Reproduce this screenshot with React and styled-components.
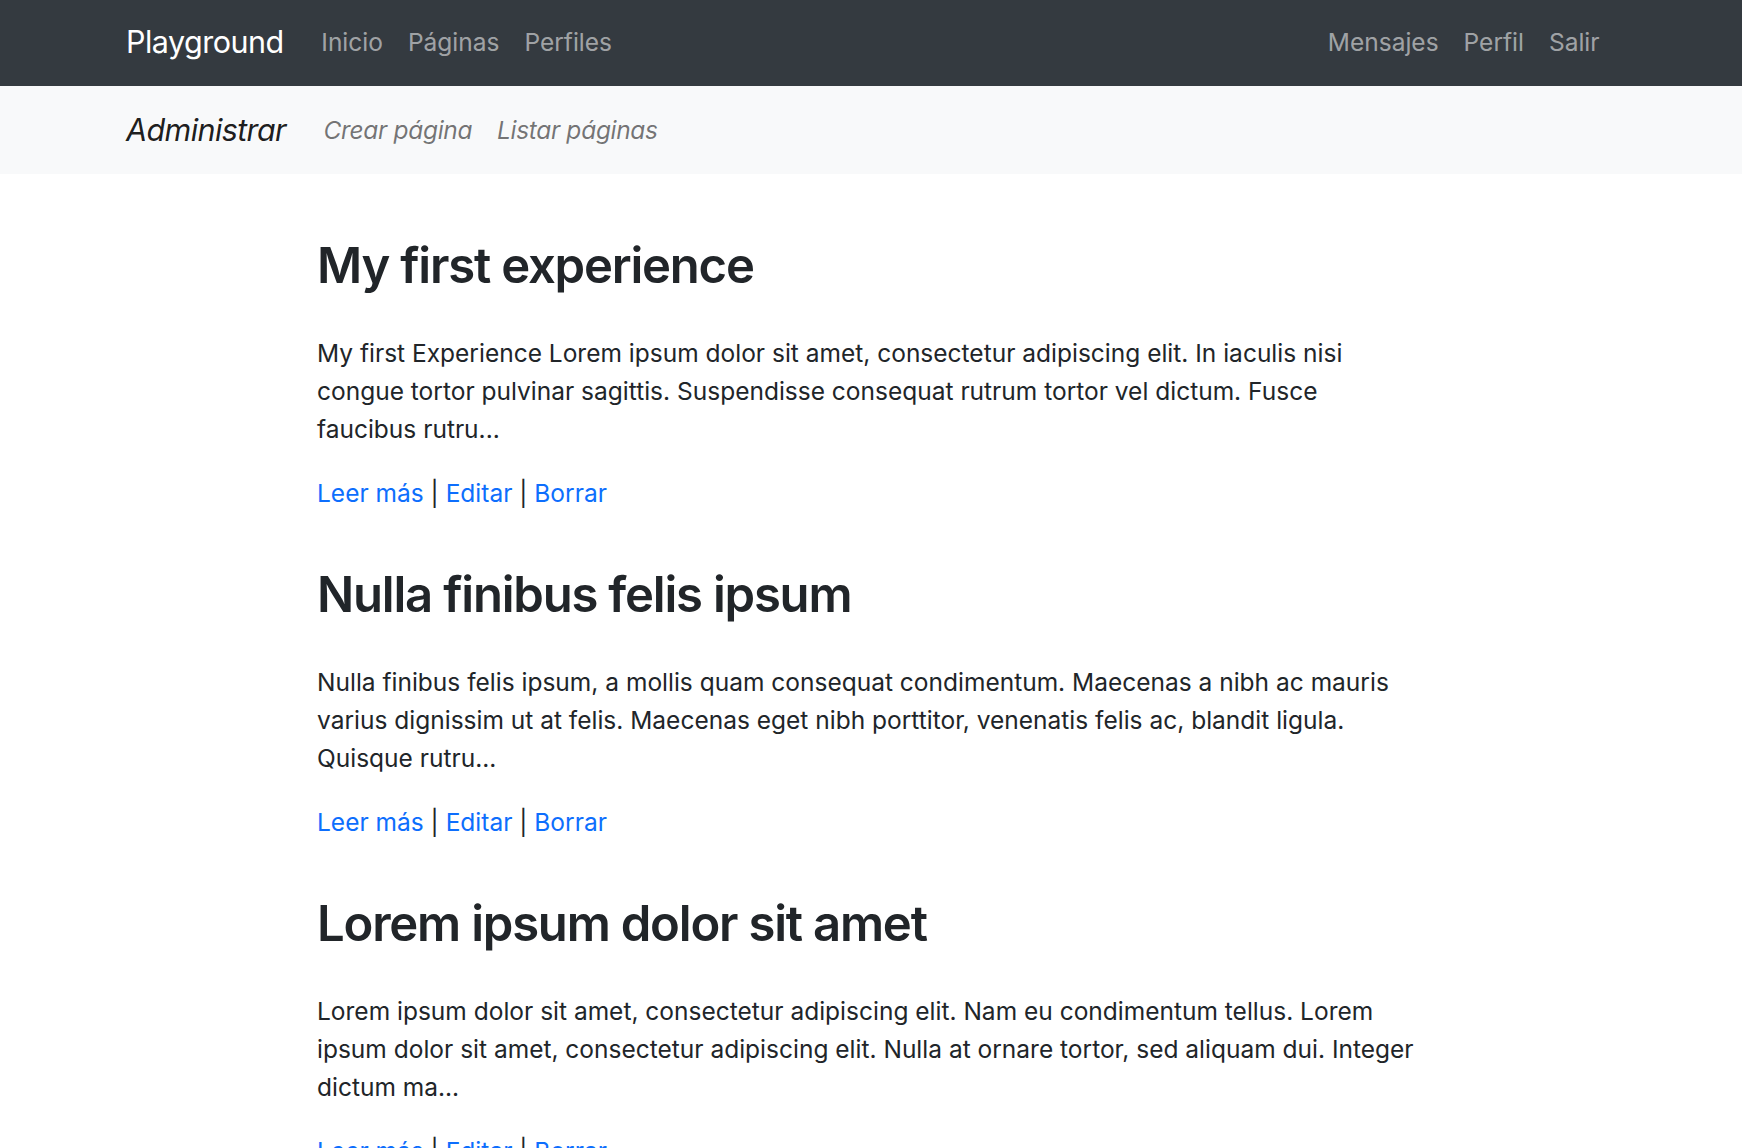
import React from "react";
import styled, { createGlobalStyle } from "styled-components";

const GlobalStyle = createGlobalStyle`
  html, body {
    margin: 0;
    padding: 0;
    background: #fff;
  }
  body {
    font-family: Inter, "Liberation Sans", Arial, sans-serif;
    color: #212529;
    overflow: hidden;
  }
`;

const TopBar = styled.nav`
  display: flex;
  align-items: center;
  justify-content: space-between;
  box-sizing: border-box;
  height: 86px;
  padding: 0 130px 2px 126px;
  background-color: #343a40;
`;

const SubBar = styled.nav`
  display: flex;
  align-items: center;
  height: 88px;
  padding: 0 126px;
  background-color: #f8f9fa;
`;

const Brand = styled.a`
  font-size: 30.5px;
  line-height: 46px;
  margin-right: 25px;
  color: ${(p) => (p.$light ? "#fff" : "rgba(0, 0, 0, 0.9)")};
  font-style: ${(p) => (p.$italic ? "italic" : "normal")};
  letter-spacing: ${(p) => (p.$italic ? "-0.6px" : "-0.5px")};
  text-decoration: none;
`;

const NavGroup = styled.div`
  display: flex;
  align-items: center;
`;

const NavLink = styled.a`
  padding: 0 12.5px;
  font-size: 24.5px;
  line-height: 38px;
  text-decoration: none;
  color: ${(p) => (p.$light ? "rgba(255, 255, 255, 0.55)" : "rgba(0, 0, 0, 0.55)")};
  font-style: ${(p) => (p.$italic ? "italic" : "normal")};
  letter-spacing: ${(p) => (p.$italic ? "-0.35px" : "0")};
`;

const Main = styled.main`
  padding: 61px 323px 0 317px;
`;

const Article = styled.article`
  margin-bottom: 52px;
`;

const Title = styled.h2`
  margin: 0 0 38px;
  font-size: 49px;
  line-height: 61px;
  font-weight: 600;
  letter-spacing: -1.2px;
  color: #212529;
`;

const Excerpt = styled.p`
  margin: 0 0 26px;
  font-size: 24.5px;
  line-height: 38px;
`;

const Actions = styled.div`
  font-size: 24.5px;
  line-height: 38px;
`;

const ActionLink = styled.a`
  color: #0d6efd;
  text-decoration: none;
`;

const posts = [
  {
    title: "My first experience",
    text:
      "My first Experience Lorem ipsum dolor sit amet, consectetur adipiscing elit. In iaculis nisi congue tortor pulvinar sagittis. Suspendisse consequat rutrum tortor vel dictum. Fusce faucibus rutru...",
  },
  {
    title: "Nulla finibus felis ipsum",
    text:
      "Nulla finibus felis ipsum, a mollis quam consequat condimentum. Maecenas a nibh ac mauris varius dignissim ut at felis. Maecenas eget nibh porttitor, venenatis felis ac, blandit ligula. Quisque rutru...",
  },
  {
    title: "Lorem ipsum dolor sit amet",
    text:
      "Lorem ipsum dolor sit amet, consectetur adipiscing elit. Nam eu condimentum tellus. Lorem ipsum dolor sit amet, consectetur adipiscing elit. Nulla at ornare tortor, sed aliquam dui. Integer dictum ma...",
  },
];

export default function App() {
  return (
    <>
      <GlobalStyle />
      <TopBar>
        <NavGroup>
          <Brand $light href="#">Playground</Brand>
          <NavLink $light href="#">Inicio</NavLink>
          <NavLink $light href="#">Páginas</NavLink>
          <NavLink $light href="#">Perfiles</NavLink>
        </NavGroup>
        <NavGroup>
          <NavLink $light href="#">Mensajes</NavLink>
          <NavLink $light href="#">Perfil</NavLink>
          <NavLink $light href="#">Salir</NavLink>
        </NavGroup>
      </TopBar>
      <SubBar>
        <Brand $italic href="#">Administrar</Brand>
        <NavLink $italic href="#">Crear página</NavLink>
        <NavLink $italic href="#">Listar páginas</NavLink>
      </SubBar>
      <Main>
        {posts.map((post) => (
          <Article key={post.title}>
            <Title>{post.title}</Title>
            <Excerpt>{post.text}</Excerpt>
            <Actions>
              <ActionLink href="#">Leer más</ActionLink> |{" "}
              <ActionLink href="#">Editar</ActionLink> |{" "}
              <ActionLink href="#">Borrar</ActionLink>
            </Actions>
          </Article>
        ))}
      </Main>
    </>
  );
}
